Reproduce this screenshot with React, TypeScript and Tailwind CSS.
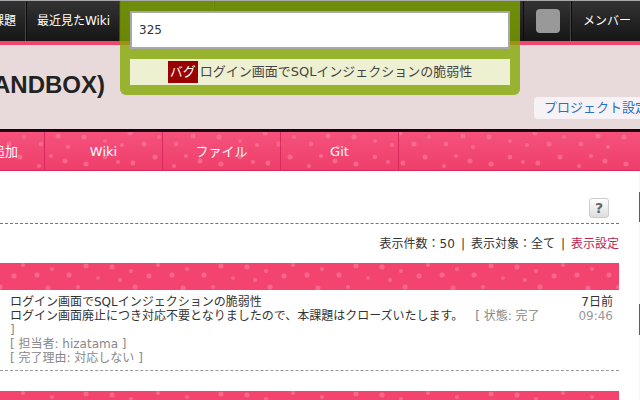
const FONT = "[font-family:'DejaVu_Sans','Noto_Sans_CJK_JP',sans-serif]";

const NAV_DOTS: [number, number, number][] = [
  [9, 12, 2.5], [24, 5, 1.8], [41, 12, 2.3], [58, 4, 2.5], [68, 15, 2], [84, 5, 2.5], [105, 9, 1.8], [122, 13, 2], [130, 1, 2.5],
  [133, 31, 2.5], [20, 25, 2.5], [39, 34, 2], [51, 24, 2], [65, 29, 2.5], [86, 32, 2.5], [105, 25, 2.3], [118, 30, 2],
];
const BAND_DOTS: [number, number, number][] = [
  [23, 2, 2], [14, 13, 2.5], [37, 12, 2.5], [52, 6, 2], [69, 12, 2.5], [86, 3, 2.5], [98, 15, 1.8], [112, 4, 2.5], [120, 17, 2], [131, 8, 2],
  [48, 25, 2.5], [78, 24, 2], [0, 24, 2.5], [135, 24, 2.5],
];

function Dots({ id, height, dots }: { id: string; height: number; dots: [number, number, number][] }) {
  return (
    <svg className="absolute inset-0 w-full h-full" aria-hidden="true">
      <defs>
        <pattern id={id} width="135" height={height} patternUnits="userSpaceOnUse">
          {dots.map(([x, y, r], i) => (
            <circle key={i} cx={x} cy={y} r={r} fill="#fb7fa0" fillOpacity="0.6" />
          ))}
        </pattern>
      </defs>
      <rect width="100%" height="100%" fill={`url(#${id})`} />
    </svg>
  );
}

function Band({ id }: { id: string }) {
  return (
    <div className="relative h-[27px] shrink-0 bg-[#f34470] overflow-hidden">
      <Dots id={id} height={27} dots={BAND_DOTS} />
    </div>
  );
}

function TopItem({ children, className = "" }: { children: React.ReactNode; className?: string }) {
  return (
    <div className={`h-full flex items-center justify-center shrink-0 border-r border-[#0c0c0c] shadow-[inset_-1px_0_0_#444] whitespace-nowrap text-[12px] text-white ${className}`}>
      {children}
    </div>
  );
}

function NavItem({ label }: { label: string }) {
  return (
    <div className="relative w-[118px] h-full shrink-0 flex items-center justify-center pt-[1px] border-r border-[#d62a5c] text-[13px] text-white whitespace-nowrap">
      {label}
    </div>
  );
}

export default function App() {
  return (
    <div className={`relative w-[640px] h-[400px] overflow-hidden bg-white text-[#333] ${FONT}`}>
      <div className="h-px bg-[#a8a8a8]" />
      <div className="h-[40px] flex bg-gradient-to-b from-[#333333] to-[#161616]">
        <div className="flex h-full -ml-[66px]">
          <TopItem className="w-[93px]">最近見た課題</TopItem>
          <TopItem className="w-[94px]">最近見たWiki</TopItem>
          <TopItem className="w-[94px]">{" "}</TopItem>
        </div>
        <div className="flex h-full ml-auto">
          <TopItem className="w-[49px] border-l border-[#0c0c0c]">
            <div className="w-[24px] h-[24px] rounded-[4px] bg-[#999999]" />
          </TopItem>
          <div className="w-[68px] h-full flex items-center pl-[11px] text-[12px] text-white whitespace-nowrap">メンバー</div>
        </div>
      </div>
      <div className="h-[4px] bg-[#f3446e]" />

      <div className="h-[84px] flex items-center bg-[#e8dada]">
        <h1 className="-ml-[7px] -mt-[5px] text-[24px] font-bold text-[#222] whitespace-nowrap [font-family:'Liberation_Sans',sans-serif]">ANDBOX)</h1>
        <a className="ml-auto self-end mb-[10px] h-[22px] -mr-[14px] pl-[10px] pr-[6px] flex items-center bg-[#f6f2f5] rounded-[4px] text-[13px] text-[#2a6fc4] whitespace-nowrap">プロジェクト設定</a>
      </div>

      <div className="relative h-[42px] border-t-[3px] border-t-[#200014] border-b border-b-[#d62a5c] bg-gradient-to-b from-[#f5527c] to-[#ee3e6a] overflow-hidden">
        <Dots id="navdots" height={38} dots={NAV_DOTS} />
        <div className="relative flex h-full -ml-[73px]">
          <NavItem label="課題の追加" />
          <NavItem label="Wiki" />
          <NavItem label="ファイル" />
          <NavItem label="Git" />
        </div>
      </div>

      <div className="flex">
        <main className="w-[619px] shrink-0 flex flex-col">
          <div className="h-[53px] flex items-start justify-end pt-[27px] pr-[10px] border-b border-dashed border-[#e0406a]">
            <button className="w-[20px] h-[20px] rounded-[3px] border border-[#cccccc] bg-gradient-to-b from-white to-[#dddddd] text-[14px] leading-[18px] font-bold text-[#666]">?</button>
          </div>
          <div className="h-[39px] flex items-center justify-end text-[12px] text-[#333] whitespace-pre">
            <span>表示件数：50</span>
            <span className="mx-[6px]">|</span>
            <span>表示対象：全て</span>
            <span className="mx-[6px]">|</span>
            <a className="text-[#c0234f]">表示設定</a>
          </div>
          <Band id="band1" />
          <div className="flex h-[81px] shrink-0 pt-[5px] pl-[10px] border-b border-dashed border-[#999] text-[12px] leading-[14px]">
            <div className="w-[535px] shrink-0">
              <p>ログイン画面でSQLインジェクションの脆弱性</p>
              <p>
                ログイン画面廃止につき対応不要となりましたので、本課題はクローズいたします。 <span className="ml-[8px] text-[#888]">[ 状態: 完了 ]</span>
              </p>
              <p className="text-[#888]">[ 担当者: hizatama ]</p>
              <p className="text-[#888]">[ 完了理由: 対応しない ]</p>
            </div>
            <div className="flex-1 text-right pr-[6px]">
              <p>7日前</p>
              <p className="text-[#999]">09:46</p>
            </div>
          </div>
          <div className="mt-[20px]">
            <Band id="band2" />
          </div>
        </main>
        <aside className="ml-[20px] w-px bg-[#f6f6f6] flex flex-col">
          <div className="mt-[21px] h-[30px] bg-[#b8305a]" />
          <div className="mt-[82px] h-[31px] bg-[#b8305a]" />
        </aside>
      </div>

      <div className="absolute left-[120px] top-px w-[400px] h-[94px] rounded-b-[6px] bg-[rgba(129,168,0,0.78)] px-[10px] pt-[10px]">
        <input
          readOnly
          value="325"
          className="block w-full h-[38px] border-2 border-[#a8a8a8] bg-white px-[7px] text-[12px] text-[#333] outline-none"
        />
        <div className="mt-[10px] h-[26px] flex items-center justify-center bg-[#eef0d2] text-[13px] text-[#444] whitespace-nowrap">
          <span className="h-[22px] px-[2px] mr-[2px] flex items-center bg-[#990000] text-white">バグ</span>
          <span>ログイン画面でSQLインジェクションの脆弱性</span>
        </div>
      </div>
    </div>
  );
}
